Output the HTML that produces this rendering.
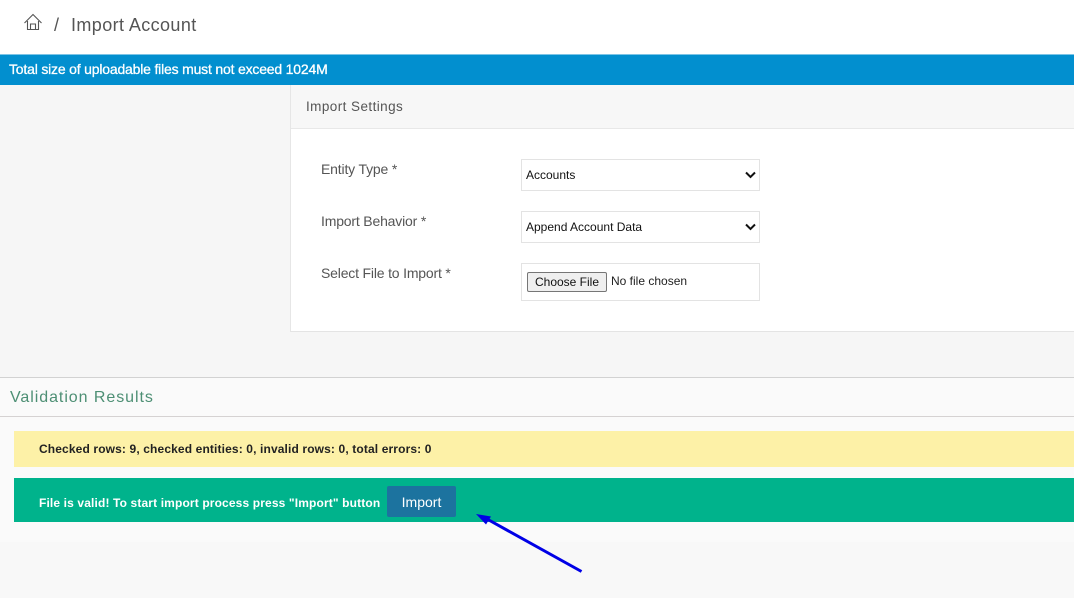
<!DOCTYPE html>
<html lang="en">
<head>
<meta charset="utf-8">
<title>Import Account</title>
<style>
html,body{margin:0;padding:0;}
body{width:1074px;height:598px;position:relative;overflow:hidden;background:#f8f8f8;font-family:"Liberation Sans",Arial,sans-serif;}
.a{position:absolute;white-space:nowrap;}
.box{position:absolute;box-sizing:border-box;}
</style>
</head>
<body>
<div class="box" style="left:0;top:0;width:1074px;height:55px;background:#fff;"></div>
<svg class="a" style="left:23px;top:13px;" width="20" height="20" viewBox="0 0 20 20" fill="none" stroke="#555" stroke-width="1.1">
<path d="M1.5 10 L10 1.5 L18.5 10"/>
<path d="M4.5 8 V16.5 H15.5 V8"/>
<path d="M7.5 16.5 V11 H12.5 V16.5"/>
</svg>
<div class="a" style="left:54px;top:14px;font-size:18px;line-height:22px;color:#555;">/</div>
<div class="a" style="left:71px;top:14px;font-size:18px;line-height:22px;color:#555;letter-spacing:.4px;">Import Account</div>

<div class="box" style="left:0;top:54px;width:1074px;height:31px;background:#028fcf;border-top:1px solid #7cc4e6;"></div>
<div class="a" style="left:9px;top:61px;font-size:14px;line-height:17px;color:#fff;font-weight:400;-webkit-text-stroke:.3px #fff;letter-spacing:-.19px;">Total size of uploadable files must not exceed 1024M</div>

<div class="box" style="left:0;top:85px;width:1074px;height:292px;background:#f6f6f6;"></div>
<div class="box" style="left:290px;top:85px;width:784px;height:247px;background:#fff;border-left:1px solid #e6e6e6;border-bottom:1px solid #e4e4e4;"></div>
<div class="box" style="left:291px;top:85px;width:783px;height:44px;background:#f7f7f7;border-bottom:1px solid #e8e8e8;"></div>
<div class="a" style="left:306px;top:98px;font-size:13.5px;line-height:17px;color:#555;letter-spacing:.43px;">Import Settings</div>

<div class="a" style="left:321px;top:161px;font-size:14px;line-height:17px;color:#555;letter-spacing:-.17px;">Entity Type *</div>
<div class="a" style="left:321px;top:213px;font-size:14px;line-height:17px;color:#555;letter-spacing:-.18px;">Import Behavior *</div>
<div class="a" style="left:321px;top:265px;font-size:14px;line-height:17px;color:#555;letter-spacing:-.18px;">Select File to Import *</div>

<div class="box" style="left:521px;top:159px;width:239px;height:32px;background:#fff;border:1px solid #e3e3e3;"></div>
<div class="a" style="left:526px;top:168px;font-size:12px;line-height:15px;color:#111;">Accounts</div>
<svg class="a" style="left:745px;top:171px;" width="11" height="8" viewBox="0 0 11 8" fill="none" stroke="#111" stroke-width="2"><path d="M1 1.5 L5.5 6 L10 1.5"/></svg>

<div class="box" style="left:521px;top:211px;width:239px;height:32px;background:#fff;border:1px solid #e3e3e3;"></div>
<div class="a" style="left:526px;top:220px;font-size:12px;line-height:15px;color:#111;">Append Account Data</div>
<svg class="a" style="left:745px;top:223px;" width="11" height="8" viewBox="0 0 11 8" fill="none" stroke="#111" stroke-width="2"><path d="M1 1.5 L5.5 6 L10 1.5"/></svg>

<div class="box" style="left:521px;top:263px;width:239px;height:38px;background:#fff;border:1px solid #e3e3e3;"></div>
<div class="box" style="left:527px;top:272px;width:80px;height:20px;background:#efefef;border:1px solid #767676;border-radius:2px;font-size:12px;line-height:18px;text-align:center;color:#111;">Choose File</div>
<div class="a" style="left:611px;top:274px;font-size:12px;line-height:15px;color:#222;">No file chosen</div>

<div class="box" style="left:0;top:377px;width:1074px;height:165px;background:#fafafa;border-top:1px solid #d2d2d2;"></div>
<div class="box" style="left:0;top:416px;width:1074px;height:1px;background:#d5d2d2;"></div>
<div class="a" style="left:10px;top:389px;font-size:16px;line-height:18px;color:#4d8f74;letter-spacing:.94px;">Validation Results</div>

<div class="box" style="left:14px;top:431px;width:1060px;height:36px;background:#fdf1a7;"></div>
<div class="a" style="left:39px;top:442px;font-size:12px;line-height:15px;font-weight:700;color:#222;letter-spacing:.13px;">Checked rows: 9, checked entities: 0, invalid rows: 0, total errors: 0</div>

<div class="box" style="left:14px;top:478px;width:1060px;height:44px;background:#00b38c;"></div>
<div class="a" style="left:39px;top:496px;font-size:12px;line-height:15px;font-weight:700;color:#fff;letter-spacing:.135px;">File is valid! To start import process press "Import" button</div>
<div class="box" style="left:387px;top:486px;width:69px;height:31px;background:#1c739f;border-radius:2px;color:#fff;font-size:14px;line-height:33px;text-align:center;">Import</div>

<svg class="a" style="left:0;top:0;" width="1074" height="598" viewBox="0 0 1074 598">
<path d="M581.5 571.5 L487 519" stroke="#0000e6" stroke-width="3" fill="none"/>
<path d="M476 514 L491 516.5 L486 524.5 Z" fill="#0000e6"/>
</svg>
</body>
</html>
